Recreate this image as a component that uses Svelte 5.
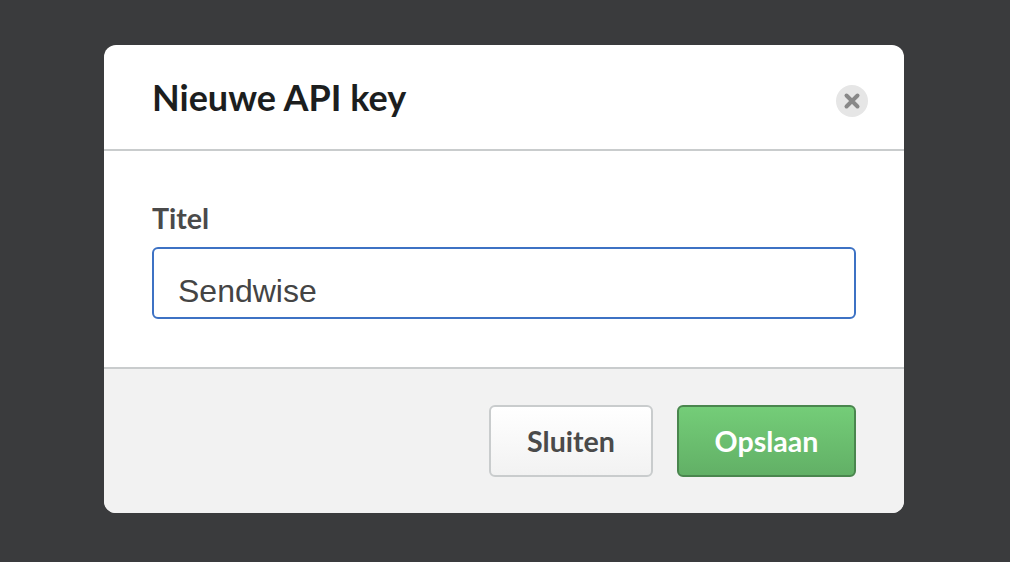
<script>
	let title = "Sendwise";
</script>

<div class="overlay">
	<div class="modal">
		<div class="header">
			<h2>Nieuwe API key</h2>
			<button class="close" aria-label="Sluiten">
				<svg width="18" height="18" viewBox="0 0 18 18">
					<path d="M3.5 3.5L14.5 14.5M14.5 3.5L3.5 14.5" stroke="#888" stroke-width="4" stroke-linecap="round" fill="none" />
				</svg>
			</button>
		</div>
		<div class="body">
			<label for="title">Titel</label>
			<input id="title" type="text" bind:value={title} />
		</div>
		<div class="footer">
			<button class="btn default">Sluiten</button>
			<button class="btn primary">Opslaan</button>
		</div>
	</div>
</div>

<style>
	:global(body) {
		margin: 0;
		background: #3a3b3d;
	}
	.overlay {
		height: 562px;
		padding: 45px 0 0 104px;
		box-sizing: border-box;
		font-family: Lato, sans-serif;
	}
	.modal {
		width: 800px;
		height: 468px;
		background: #fff;
		border-radius: 12px;
		overflow: hidden;
		display: flex;
		flex-direction: column;
	}
	.header {
		height: 106px;
		box-sizing: border-box;
		border-bottom: 2px solid #c9cccd;
		padding: 0 36px 0 48px;
		display: flex;
		align-items: center;
		justify-content: space-between;
	}
	h2 {
		margin: 0;
		font-size: 36px;
		font-weight: 700;
		color: #1c1e1e;
	}
	.close {
		width: 32px;
		height: 32px;
		margin-top: 8px;
		padding: 0;
		border: none;
		border-radius: 50%;
		background: #e6e6e6;
		display: flex;
		align-items: center;
		justify-content: center;
	}
	.body {
		height: 216px;
		box-sizing: border-box;
		padding: 50px 48px 0;
	}
	label {
		display: block;
		font-size: 28.6px;
		font-weight: 700;
		line-height: 34px;
		color: #4a4a4a;
		margin-bottom: 12px;
	}
	input {
		display: block;
		width: 100%;
		height: 72px;
		box-sizing: border-box;
		border: 2px solid #3d72c4;
		border-radius: 6px;
		padding: 16px 24px 0;
		font-family: "Liberation Sans", Arial, sans-serif;
		font-size: 32px;
		color: #444;
		outline: none;
		background: #fff;
	}
	.footer {
		flex: 1;
		box-sizing: border-box;
		background: #f2f2f2;
		border-top: 2px solid #c9cccd;
		padding: 36px 48px 0;
		display: flex;
		justify-content: flex-end;
		align-items: flex-start;
		gap: 24px;
	}
	.btn {
		height: 72px;
		box-sizing: border-box;
		border-radius: 6px;
		font-family: Lato, sans-serif;
		font-size: 28.6px;
		font-weight: 700;
		padding: 0;
	}
	.default {
		width: 164px;
		border: 2px solid #c9cccd;
		background: linear-gradient(#fff, #f2f2f2);
		color: #4a4a4a;
	}
	.primary {
		width: 179px;
		border: 2px solid #4a864e;
		background: linear-gradient(#74cd78, #62b066);
		color: #fff;
	}
</style>
